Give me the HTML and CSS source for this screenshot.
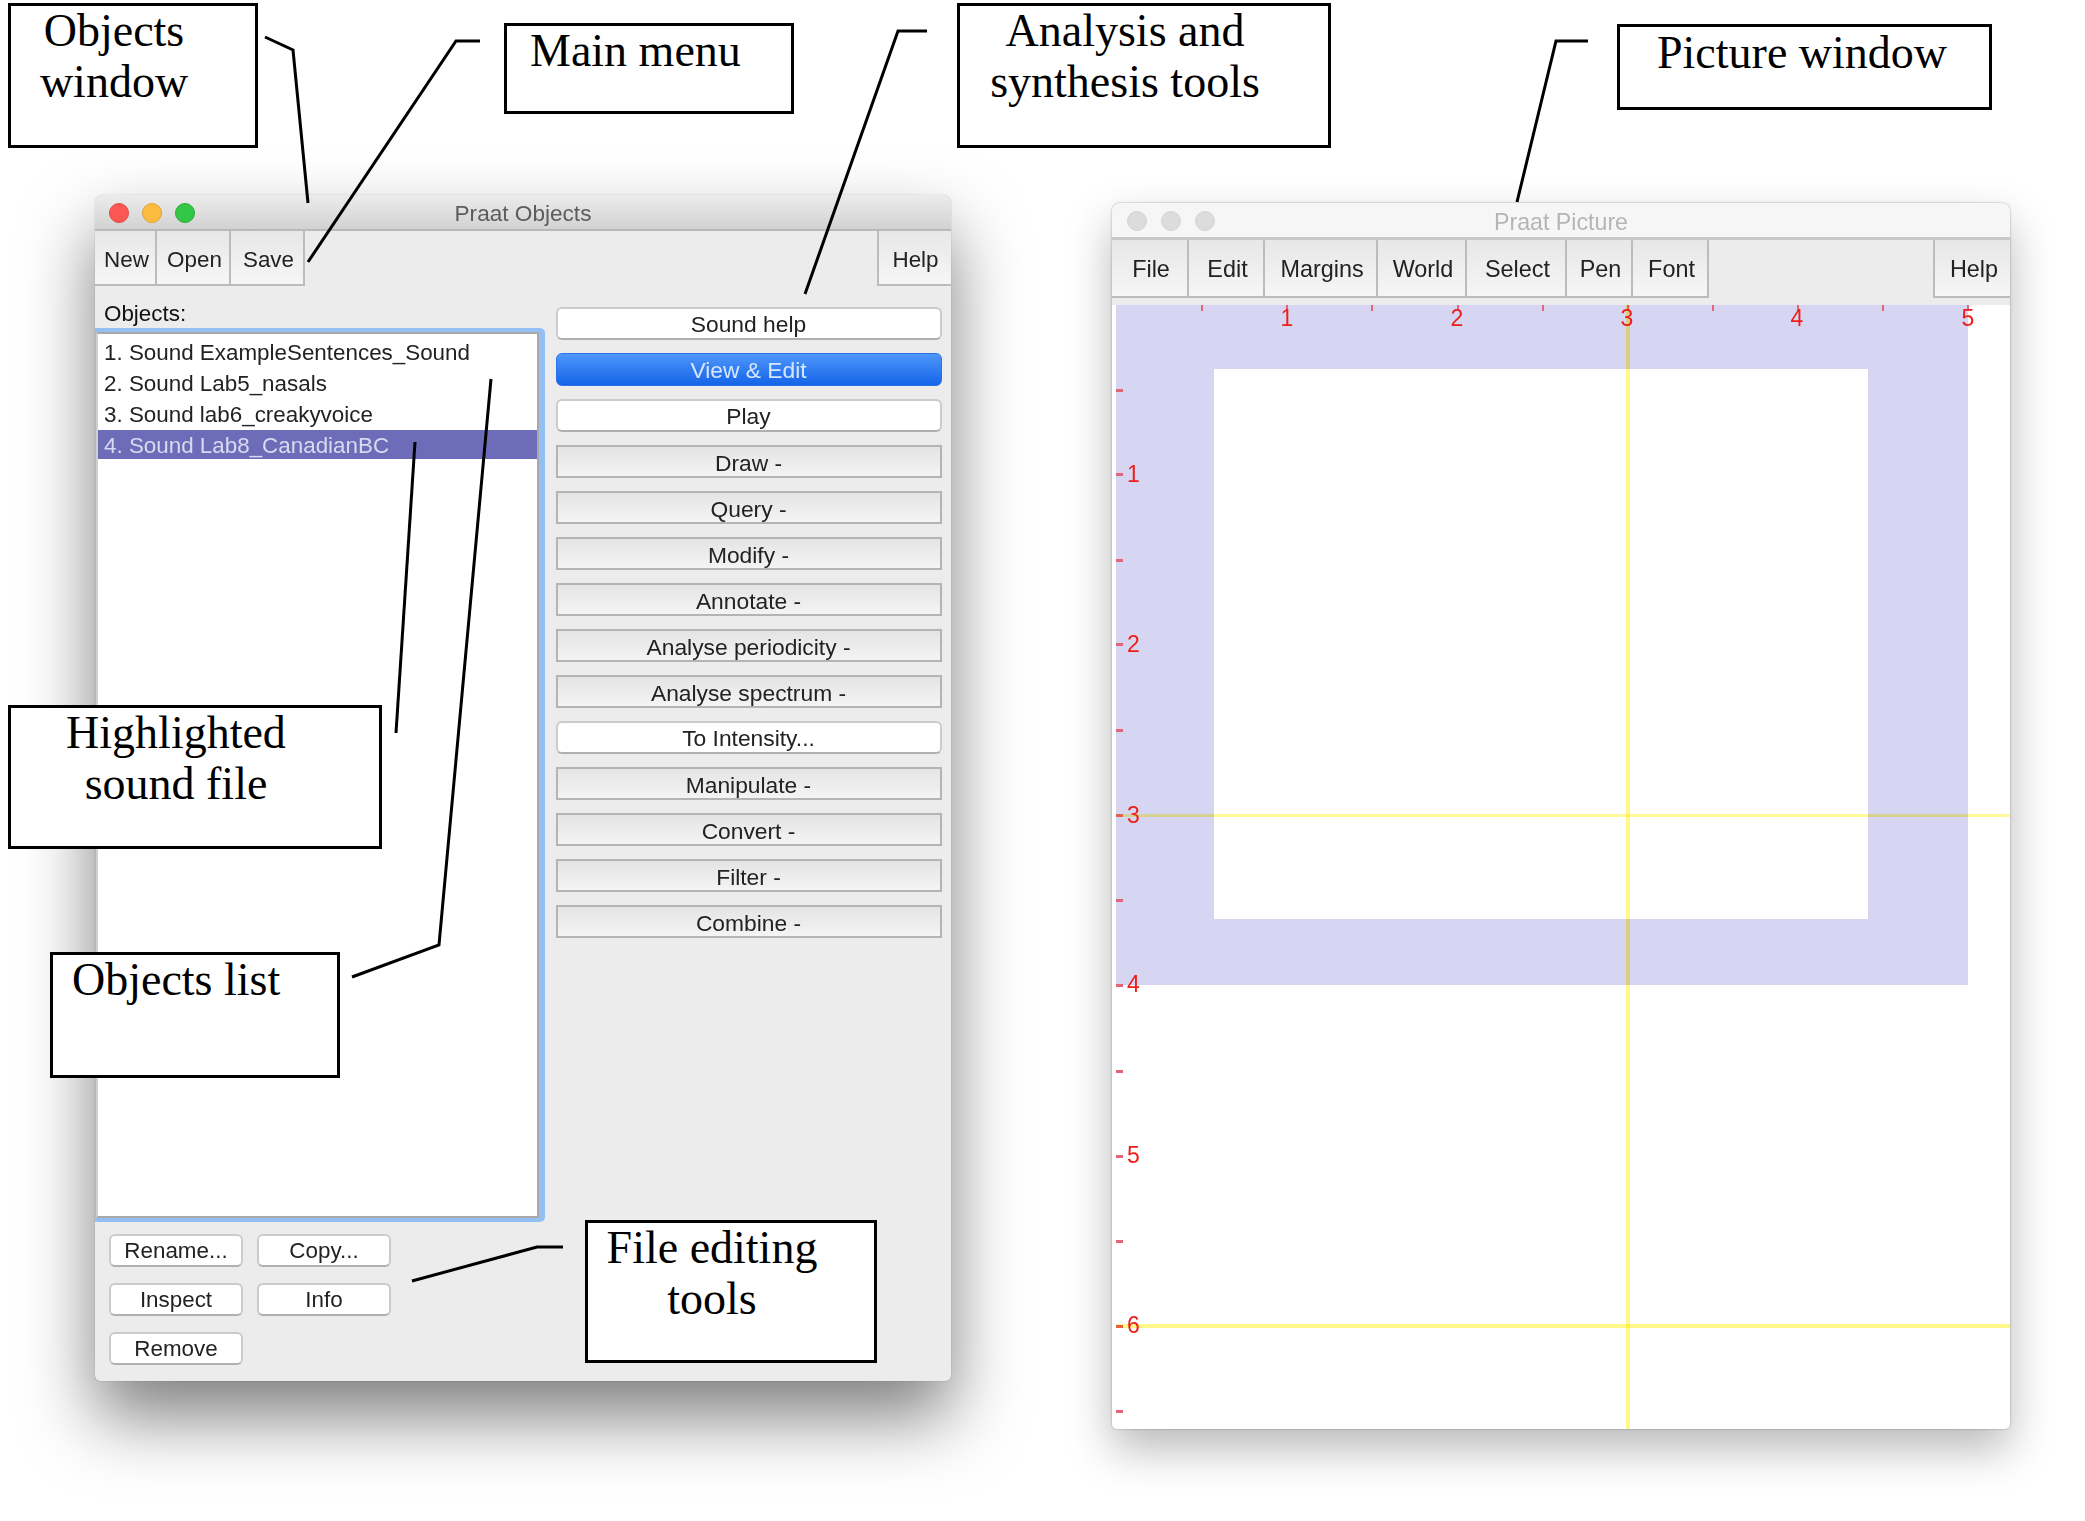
FILE: index.html
```html
<!DOCTYPE html>
<html lang="en">
<head>
    <meta charset="UTF-8">
    <title>Praat windows</title>
    <link rel="stylesheet" href="styles.css">
</head>
<body>

    <!-- Objects window -->
    <div class="window objects-window">
        <div class="titlebar">
            <span class="light red"></span>
            <span class="light yellow"></span>
            <span class="light green"></span>
            <span class="title">Praat Objects</span>
        </div>
        <div class="menubar">
            <span class="menu">New</span>
            <span class="menu">Open</span>
            <span class="menu">Save</span>
            <span class="menu menu-help">Help</span>
        </div>
        <div class="objects-body">
            <div class="objects-left">
                <div class="objects-label">Objects:</div>
                <div class="list-ring">
                    <ul class="list">
                        <li>1. Sound ExampleSentences_Sound</li>
                        <li>2. Sound Lab5_nasals</li>
                        <li>3. Sound lab6_creakyvoice</li>
                        <li class="selected">4. Sound Lab8_CanadianBC</li>
                    </ul>
                </div>
                <div class="edit-buttons">
                    <button class="btn">Rename...</button>
                    <button class="btn">Copy...</button>
                    <button class="btn">Inspect</button>
                    <button class="btn">Info</button>
                    <button class="btn">Remove</button>
                </div>
            </div>
            <div class="actions">
                <button class="btn">Sound help</button>
                <button class="btn primary">View &amp; Edit</button>
                <button class="btn">Play</button>
                <button class="btn drop">Draw -</button>
                <button class="btn drop">Query -</button>
                <button class="btn drop">Modify -</button>
                <button class="btn drop">Annotate -</button>
                <button class="btn drop">Analyse periodicity -</button>
                <button class="btn drop">Analyse spectrum -</button>
                <button class="btn">To Intensity...</button>
                <button class="btn drop">Manipulate -</button>
                <button class="btn drop">Convert -</button>
                <button class="btn drop">Filter -</button>
                <button class="btn drop">Combine -</button>
            </div>
        </div>
    </div>

    <!-- Picture window -->
    <div class="window picture-window">
        <div class="titlebar inactive">
            <span class="light"></span>
            <span class="light"></span>
            <span class="light"></span>
            <span class="title">Praat Picture</span>
        </div>
        <div class="menubar">
            <span class="menu m-file">File</span>
            <span class="menu m-edit">Edit</span>
            <span class="menu m-margins">Margins</span>
            <span class="menu m-world">World</span>
            <span class="menu m-select">Select</span>
            <span class="menu m-pen">Pen</span>
            <span class="menu m-font">Font</span>
            <span class="menu menu-help m-help">Help</span>
        </div>
        <div class="canvas-gap"></div>
        <svg class="canvas" width="898" height="1124" viewBox="0 0 898 1124">
            <rect x="4" y="0" width="852" height="680" fill="#d7d6f2"/>
            <rect x="102" y="64" width="654" height="550" fill="#fff"/>

            <g class="ticks">
                <rect x="89" y="0" width="2" height="6"/>
                <rect x="174" y="0" width="2" height="6"/>
                <rect x="259" y="0" width="2" height="6"/>
                <rect x="345" y="0" width="2" height="6"/>
                <rect x="430" y="0" width="2" height="6"/>
                <rect x="515" y="0" width="2" height="6"/>
                <rect x="600" y="0" width="2" height="6"/>
                <rect x="685" y="0" width="2" height="6"/>
                <rect x="770" y="0" width="2" height="6"/>
                <rect x="855" y="0" width="2" height="6"/>
                <rect x="4" y="84" width="7" height="3"/>
                <rect x="4" y="168" width="7" height="3"/>
                <rect x="4" y="254" width="7" height="3"/>
                <rect x="4" y="338" width="7" height="3"/>
                <rect x="4" y="424" width="7" height="3"/>
                <rect x="4" y="509" width="7" height="3"/>
                <rect x="4" y="594" width="7" height="3"/>
                <rect x="4" y="679" width="7" height="3"/>
                <rect x="4" y="765" width="7" height="3"/>
                <rect x="4" y="850" width="7" height="3"/>
                <rect x="4" y="935" width="7" height="3"/>
                <rect x="4" y="1020" width="7" height="3"/>
                <rect x="4" y="1105" width="7" height="3"/>
            </g>

            <rect x="4" y="509" width="894" height="3" class="guide guide-thin"/>
            <rect x="4" y="1019" width="894" height="4" class="guide"/>
            <rect x="514" y="0" width="4" height="1124" class="guide"/>

            <g class="numbers top-numbers">
                <text x="175" y="21">1</text>
                <text x="345" y="21">2</text>
                <text x="515" y="21">3</text>
                <text x="685" y="21">4</text>
                <text x="856" y="21">5</text>
            </g>
            <g class="numbers">
                <text x="15" y="177">1</text>
                <text x="15" y="347">2</text>
                <text x="15" y="518">3</text>
                <text x="15" y="687">4</text>
                <text x="15" y="858">5</text>
                <text x="15" y="1028">6</text>
            </g>
        </svg>
    </div>

    <!-- Callouts -->
    <div class="note note-objects">Objects<br>window</div>
    <div class="note note-menu">Main menu</div>
    <div class="note note-analysis">Analysis and<br>synthesis tools</div>
    <div class="note note-picture">Picture window</div>
    <div class="note note-highlight">Highlighted<br>sound file</div>
    <div class="note note-list">Objects list</div>
    <div class="note note-file">File editing<br>tools</div>

    <svg class="leaders" width="2085" height="1521" viewBox="0 0 2085 1521">
        <polyline points="265,37 293,50 308,203"/>
        <polyline points="480,41 456,41 308,262"/>
        <polyline points="927,31 898,31 805,294"/>
        <polyline points="1588,41 1556,41 1517,202"/>
        <polyline points="396,733 415,442"/>
        <polyline points="352,977 439,945 491,379"/>
        <polyline points="412,1281 537,1247 563,1247"/>
    </svg>

</body>
</html>
```

FILE: styles.css
```css
/* Reset */
* {
    margin: 0;
    padding: 0;
    box-sizing: border-box;
}

body {
    width: 2085px;
    height: 1521px;
    position: relative;
    overflow: hidden;
    background: #fff;
    font-family: "Liberation Sans", Arial, sans-serif;
    font-size: 22.4px;
    color: #222;
}

/* Windows */
.window {
    position: absolute;
    display: flex;
    flex-direction: column;
    background: #ececec;
    border-radius: 8px 8px 5px 5px;
    overflow: hidden;
}

.objects-window {
    left: 95px;
    top: 195px;
    width: 856px;
    height: 1186px;
    box-shadow: 0 0 1px rgba(0, 0, 0, 0.45), 0 36px 70px rgba(0, 0, 0, 0.5);
}

.picture-window {
    left: 1112px;
    top: 203px;
    width: 898px;
    height: 1226px;
    box-shadow: 0 0 2px rgba(0, 0, 0, 0.4), 0 20px 45px rgba(0, 0, 0, 0.28);
}

/* Title bar */
.titlebar {
    height: 36px;
    flex: none;
    display: flex;
    align-items: center;
    gap: 13px;
    padding: 2px 0 0 14px;
    position: relative;
    background: linear-gradient(#ececec, #d2d2d2);
    border-bottom: 2px solid #b9b9b9;
}

.titlebar.inactive {
    height: 37px;
    gap: 14px;
    padding-left: 15px;
    background: #f6f6f6;
    border-bottom: 3px solid #c8c8c8;
}

.light {
    width: 20px;
    height: 20px;
    border-radius: 50%;
    background: #dcdcdc;
    border: 1px solid #d2d2d2;
}

.light.red { background: #fc5753; border-color: #df4744; }
.light.yellow { background: #fdbc40; border-color: #de9f34; }
.light.green { background: #33c748; border-color: #27aa35; }

.title {
    position: absolute;
    left: 0;
    right: 0;
    padding-top: 1px;
    text-align: center;
    font-size: 22.6px;
    color: #5c5c5c;
}

.inactive .title {
    padding-top: 3px;
    font-size: 23.2px;
    color: #b5b5b5;
}

/* Menu bar */
.menubar {
    display: flex;
    flex: none;
    height: 55px;
}

.menu {
    display: flex;
    align-items: center;
    justify-content: center;
    height: 100%;
    padding-left: 3px;
    padding-top: 4px;
    border-right: 2px solid #bcbcbc;
    border-bottom: 2px solid #bcbcbc;
    background: linear-gradient(#e7e7e7, #f6f6f6);
    width: 74px;
}

.objects-window .menu:first-child {
    width: 62px;
}

.menu-help {
    margin-left: auto;
    padding-left: 1px;
    border-right: 0;
    border-left: 2px solid #bcbcbc;
}

.picture-window .menubar {
    height: 58px;
    font-size: 23.4px;
}

.picture-window .menu {
    padding-top: 3px;
}

.m-file { width: 77px; }
.m-edit { width: 76px; }
.m-margins { width: 113px; }
.m-world { width: 89px; }
.m-select { width: 100px; }
.m-pen { width: 66px; }
.m-font { width: 76px; }
.picture-window .m-help { width: 77px; padding-left: 3px; }

/* Objects window body */
.objects-body {
    display: flex;
    flex: 1;
    gap: 11px;
}

.objects-left {
    width: 450px;
    display: flex;
    flex-direction: column;
}

.objects-label {
    height: 42px;
    padding: 14px 0 0 9px;
    color: #111;
    line-height: 28px;
}

.list-ring {
    height: 894px;
    border: 4px solid #93bff4;
    border-width: 4px 6px 4px 1px;
    border-radius: 0 5px 5px 0;
}

.list {
    height: 100%;
    list-style: none;
    background: #fff;
    border: 2px solid #a9a9a9;
    border-left-color: #cfcfcf;
    padding-top: 3px;
}

.list li {
    height: 31px;
    line-height: 31px;
    padding-left: 6px;
}

.list li.selected {
    height: 29px;
    background: #6d6cb8;
    color: #d9d9f0;
}

.edit-buttons {
    display: grid;
    grid-template-columns: 134px 134px;
    grid-auto-rows: 33px;
    column-gap: 14px;
    row-gap: 16px;
    padding: 12px 0 0 14px;
}

/* Buttons */
.btn {
    font-family: inherit;
    font-size: inherit;
    color: inherit;
    background: #fff;
    border: 2px solid #cbcbcb;
    border-bottom-color: #b0b0b0;
    border-radius: 6px;
}

.actions {
    width: 386px;
    padding-top: 21px;
    display: grid;
    grid-auto-rows: 33px;
    row-gap: 13px;
    align-content: start;
    font-size: 22.8px;
}

.actions .btn {
    padding-top: 2px;
    padding-right: 1px;
}

.btn.primary {
    background: linear-gradient(#4f97fb, #1464e8);
    border: 1px solid #2a72e8;
    color: #d6e6ff;
}

.actions .btn.drop {
    padding-top: 3px;
    background: linear-gradient(#e4e4e4, #f4f4f4);
    border: 2px solid #b4b4b4;
    border-radius: 0;
}

/* Picture window body */
.canvas-gap {
    height: 7px;
    flex: none;
}

.canvas {
    display: block;
    background: #fff;
    flex: none;
}

.ticks rect {
    fill: #e2657a;
}

.guide {
    fill: #fff78a;
    mix-blend-mode: multiply;
}

.guide-thin {
    fill: #fff99a;
}

.numbers text {
    font-family: "Liberation Sans", Arial, sans-serif;
    font-size: 23px;
    fill: #ec1f1a;
}

.top-numbers text {
    text-anchor: middle;
}

/* Callouts */
.note {
    position: absolute;
    background: #fff;
    border: 3px solid #000;
    color: #000;
    font-family: "Liberation Serif", "Times New Roman", serif;
    font-size: 46px;
    line-height: 51px;
    text-align: center;
    padding-right: 38px;
}

.note::before {
    content: "";
    display: block;
    margin-top: -1px;
}

.note-objects { left: 8px; top: 3px; width: 250px; height: 145px; }
.note-analysis { left: 957px; top: 3px; width: 374px; height: 145px; }
.note-highlight { left: 8px; top: 705px; width: 374px; height: 144px; }
.note-file { left: 585px; top: 1220px; width: 292px; height: 143px; }

.note-menu { left: 504px; top: 23px; width: 290px; height: 91px; text-align: left; padding: 0 0 0 23px; }
.note-picture { left: 1617px; top: 24px; width: 375px; height: 86px; text-align: left; padding: 1px 0 0 37px; }
.note-list { left: 50px; top: 952px; width: 290px; height: 126px; text-align: left; padding: 0 0 0 19px; }

.leaders {
    position: absolute;
    left: 0;
    top: 0;
    pointer-events: none;
}

.leaders polyline {
    fill: none;
    stroke: #000;
    stroke-width: 3;
}
```
